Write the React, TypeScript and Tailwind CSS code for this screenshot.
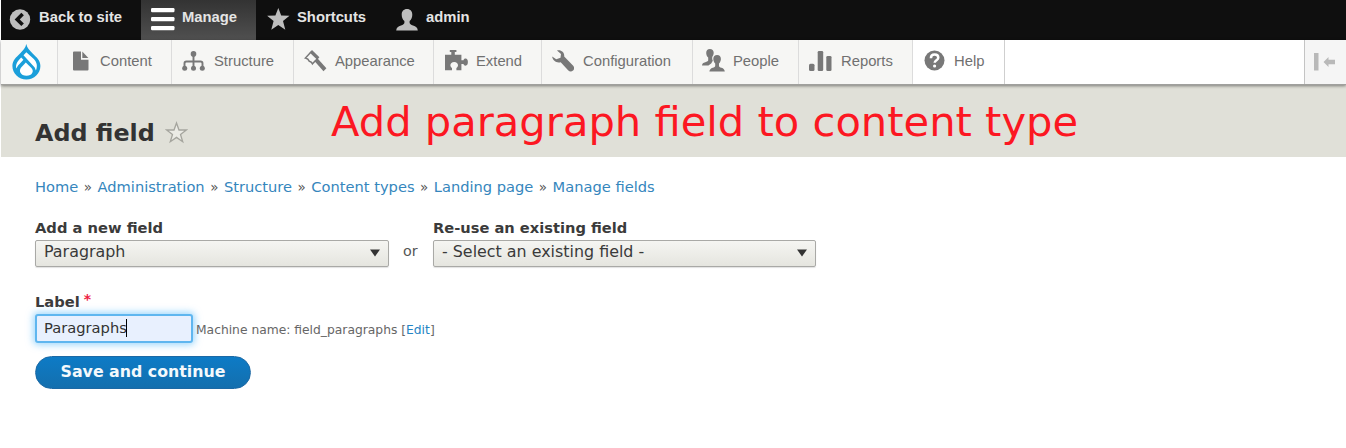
import React from "react";

const SANS = "font-['Liberation_Sans',sans-serif]";

function BackIcon() {
  return (
    <svg width="22" height="22" viewBox="0 0 22 22">
      <circle cx="11" cy="10.500" r="10.200" fill="#bebebe" />
      <path d="M13.600 5 8.200 10.400l5.400 5.400" fill="none" stroke="#111" strokeWidth="3.600" />
    </svg>
  );
}

function MenuIcon() {
  return (
    <svg width="24" height="24" viewBox="0 0 24 24" fill="#fff">
      <rect x="0" y="0" width="23.500" height="4.200" rx="1.200" />
      <rect x="0" y="9" width="23.500" height="4.200" rx="1.200" />
      <rect x="0" y="18" width="23.500" height="4.200" rx="1.200" />
    </svg>
  );
}

function StarIcon() {
  return (
    <svg width="23" height="23" viewBox="0 0 23 23" fill="#bebebe">
      <path d="M11.300 0l2.900 7.500 8.300.3-6.500 5.300 2.300 8.700-7-4.700-7 4.700 2.300-8.700L.1 7.800l8.300-.3z" />
    </svg>
  );
}

function UserIcon() {
  return (
    <svg width="22" height="22" viewBox="0 0 22 22" fill="#bebebe">
      <path d="M11 0c3.400 0 5.300 2.300 5.300 5.700 0 2.600-1.200 5-2.700 6.300v1.700c0 1.300 1.400 2 3.400 2.800 2.900 1.100 4.500 2 4.800 5H.2c.3-3 1.900-3.900 4.800-5 2-.8 3.400-1.500 3.400-2.800V12c-1.500-1.300-2.700-3.700-2.700-6.300C5.700 2.300 7.600 0 11 0z" />
    </svg>
  );
}

function DropIcon() {
  return (
    <svg width="29" height="36" viewBox="0 0 29 36">
      <path
        d="M14.300 0c-.8 3.900-3.200 6.300-6 9.200C4.200 13.300.4 16.300.4 22.100c0 7.700 6.300 13.400 14 13.400s14-5.700 14-13.400c0-5.800-3.900-8.800-8-12.900C17.500 6.300 15.100 3.900 14.300 0z"
        fill="#1b9fda"
      />
      <path d="M14.300 8.200 11.500 11.200l11.200 12.400 1.200 3c1.900-4.300 1-8.300-2.100-11.500z" fill="#fff" />
      <path d="M9.200 13.500c-3.300 3.100-5.900 6.500-4.900 11.100 1-2.600 2.700-4.300 4.600-6.200l2.500-2.600z" fill="#fff" />
      <path d="m13.800 18.600-4.600 4.800c-2.900 3.200-.7 8.300 5.300 8.300 5.700 0 7.900-4.600 4.900-7.800z" fill="#fff" />
    </svg>
  );
}

const G = "#787878";

function FileIcon() {
  return (
    <svg width="16" height="20" viewBox="0 0 16 20" fill={G}>
      <path d="M1 .5h7v8.200h7.500V18.500a1 1 0 0 1-1 1H1a1 1 0 0 1-1-1v-17a1 1 0 0 1 1-1z" />
      <path d="M9.300.5 15.400 7H9.300z" />
    </svg>
  );
}

function TreeIcon() {
  return (
    <svg width="23" height="20" viewBox="0 0 23 20">
      <path d="M11.500 3v14M2.500 17v-4.600c0-1.300.6-1.900 1.900-1.900h14.200c1.300 0 1.900.6 1.900 1.900V17" fill="none" stroke={G} strokeWidth="1.900" />
      <g fill={G}>
        <circle cx="11.500" cy="2.900" r="2.800" />
        <circle cx="2.700" cy="17.200" r="2.500" />
        <circle cx="11.500" cy="17.200" r="2.500" />
        <circle cx="20.300" cy="17.200" r="2.500" />
      </g>
    </svg>
  );
}

function BrushIcon() {
  return (
    <svg width="23" height="22" viewBox="0 0 23 22">
      <path d="M7 1.900 1.400 8c2.300.4 3.200 1.300 3.900 3.200 1.600.2 2.500 1 3.100 2.600l5.200-5.400" fill="none" stroke={G} strokeWidth="1.500" />
      <path d="M8 0 15.400 7.200 13.200 9.800 5.600 2.500z" fill={G} />
      <path d="m10.400 10.900 3.200-2.300L22.400 18.300 19.500 21.300z" fill={G} />
    </svg>
  );
}

function PuzzleIcon() {
  return (
    <svg width="23" height="21" viewBox="0 0 23 21" fill={G}>
      <path d="M4.800 0h6.600v2H9.800v2.800h6.600v5.400h2.100c.2-1 1-1.700 2.100-1.700 1.400 0 2.300 1.400 2.300 3.600s-.9 3.600-2.300 3.600c-1.100 0-1.900-.6-2.100-1.700h-2.100v6.300h-5v-2.400c1-.4 1.600-1.400 1.600-2.600 0-1.900-1.500-3.200-3.800-3.200s-3.800 1.300-3.800 3.200c0 1.200.6 2.200 1.600 2.600v2.400H0V4.800h6.300V2H4.800z" />
    </svg>
  );
}

function WrenchIcon() {
  return (
    <svg width="22" height="22" viewBox="0 0 22 22" fill={G}>
      <path d="M5 .6C8.800-.6 12.700 2.200 12.200 6.600l9 9.200c1.500 1.600 1 3.700-.2 4.800-1.300 1.200-3.500 1.200-4.900-.3L8.700 12.200C4.400 13.400.9 10.600.1 6.500l4.200 2.800 4.200-1.500.5-3.800z" />
    </svg>
  );
}

function PeopleIcon() {
  return (
    <svg width="23" height="23" viewBox="0 0 23 23" fill={G}>
      <path d="M7.900 0c2.300 0 3.800 1.500 3.800 3.800 0 .8-.2 1.600-.5 2.400-1.300 1.300-1.300 3.600-.4 5.600l-1.600 2.700-2.800 2H0c.2-2.100 1.200-2.600 3.300-3.300 1.800-.7 2.900-1 2.900-2V8.500C5.100 7.600 4.200 5.700 4.200 3.900 4.200 1.500 5.600 0 7.900 0z" />
      <path d="M15.100 6.100c2.400 0 3.800 1.600 3.800 4 0 1.800-.9 3.600-1.900 4.500v2.100c0 1.100.9 1.500 2.500 2.100 2 .7 3.100 1.700 3.300 3.800H7.400c.2-2.100 1.300-3.100 3.300-3.800 1.600-.6 2.500-1 2.500-2.100v-2.100c-1-.9-1.900-2.700-1.900-4.500 0-2.400 1.400-4 3.800-4z" />
    </svg>
  );
}

function ChartIcon() {
  return (
    <svg width="23" height="20" viewBox="0 0 23 20" fill={G}>
      <rect x="0" y="12.800" width="5.500" height="7.200" rx="1.500" />
      <rect x="8.700" y="0" width="5.500" height="20" rx="1.300" />
      <rect x="17.300" y="5" width="5.200" height="15" rx="1.300" />
    </svg>
  );
}

function HelpIcon() {
  return (
    <svg width="21" height="21" viewBox="0 0 21 21">
      <circle cx="10.500" cy="10.500" r="10" fill={G} />
      <path d="M6.900 8.200c0-2.400 1.500-3.600 3.700-3.600s3.700 1.200 3.700 3.100c0 2.500-3.600 2.700-3.600 5.100" fill="none" stroke="#fff" strokeWidth="2.500" />
      <circle cx="10.600" cy="16" r="1.600" fill="#fff" />
    </svg>
  );
}

function Item({ width, pad, gap, icon, label, help = false }: any) {
  return (
    <div
      className={`flex h-full shrink-0 items-center border-r pb-[2px] ${width} ${pad} ${help ? "border-[#cfcfcf] bg-white" : "border-[#dcdcdc] bg-[#f6f6f4]"}`}
    >
      <span className="flex shrink-0">{icon}</span>
      <span className={`${SANS} ${gap} whitespace-nowrap text-[14.800px] leading-5 text-[#707070]`}>{label}</span>
    </div>
  );
}

function TopItem({ width, pad, gap, icon, label, active = false }: any) {
  return (
    <div className={`flex h-full shrink-0 items-center ${width} ${pad} ${active ? "bg-linear-to-b from-[#333] to-[#505050]" : ""}`}>
      <span className="flex shrink-0">{icon}</span>
      <span className={`${SANS} ${gap} -mt-[5px] whitespace-nowrap text-[14.800px] font-bold leading-5 text-[#e4e4e4]`}>{label}</span>
    </div>
  );
}

function SelectBox({ width, tracking, children }: any) {
  return (
    <div
      className={`flex h-[27px] items-center justify-between rounded-[2px] border border-[#a9a9a6] bg-linear-to-b from-[#f5f5f2] to-[#e5e5df] pl-2 pr-[8px] shadow-[0_1px_1px_rgba(0,0,0,0.12)] ${width}`}
    >
      <span className={`-mt-[3px] whitespace-nowrap leading-5 text-[#3a3a3a] ${tracking}`}>{children}</span>
      <svg width="10" height="8" viewBox="0 0 10 8">
        <path d="M0 .5h10L5 7.500z" fill="#333" />
      </svg>
    </div>
  );
}

const crumbs = ["Home", "Administration", "Structure", "Content types", "Landing page", "Manage fields"];

export default function App() {
  return (
    <div className="h-[448px] w-[1346px] overflow-hidden bg-white pl-px font-['DejaVu_Sans',sans-serif] text-[#444]">
      <nav className="flex h-[39.500px] bg-[#0f0f0f]">
        <TopItem width="w-[140px]" pad="pl-[8px]" gap="ml-[8px]" icon={<BackIcon />} label="Back to site" />
        <TopItem width="w-[115px]" pad="pl-[10px]" gap="ml-[7px]" icon={<MenuIcon />} label="Manage" active />
        <TopItem width="w-[130px]" pad="pl-[11px]" gap="ml-[7px]" icon={<StarIcon />} label="Shortcuts" />
        <TopItem width="w-[110px]" pad="pl-[10px]" gap="ml-[8px]" icon={<UserIcon />} label="admin" />
      </nav>

      <div className="relative flex h-[45px] border-b border-[#a0a09d] bg-white shadow-[0_1px_3px_rgba(0,0,0,0.45)]">
        <div className="flex w-[57px] items-center border-r border-[#dcdcdc] bg-[#f8f8f6] pl-[11px] pt-px">
          <DropIcon />
        </div>
        <Item width="w-[114px]" pad="pl-[15px]" gap="ml-[11px]" icon={<FileIcon />} label="Content" />
        <Item width="w-[122px]" pad="pl-[10px]" gap="ml-[9px]" icon={<TreeIcon />} label="Structure" />
        <Item width="w-[140px]" pad="pl-[10px]" gap="ml-[8px]" icon={<BrushIcon />} label="Appearance" />
        <Item width="w-[108px]" pad="pl-[11px]" gap="ml-[8px]" icon={<PuzzleIcon />} label="Extend" />
        <Item width="w-[151px]" pad="pl-[10px]" gap="ml-[9px]" icon={<WrenchIcon />} label="Configuration" />
        <Item width="w-[106px]" pad="pl-[9px]" gap="ml-[8px]" icon={<PeopleIcon />} label="People" />
        <Item width="w-[114px]" pad="pl-[10px]" gap="ml-[9px]" icon={<ChartIcon />} label="Reports" />
        <Item width="w-[92px]" pad="pl-[11px]" gap="ml-[9px]" icon={<HelpIcon />} label="Help" help />
        <div className="ml-auto flex w-[42px] items-center border-l border-[#c4c4c4] bg-[#f5f5f5] pl-[9px]">
          <svg width="24" height="18" viewBox="0 0 24 18" fill="#b9b9b9">
            <rect x="0" y="0" width="4.500" height="17.500" />
            <path d="M9.500 9l5-5v2.800h6.500v4.400h-6.500V14z" />
          </svg>
        </div>
      </div>

      <header className="flex h-[72px] bg-[#e0e0d8]">
        <h1 className="ml-[34px] mt-[34px] w-[130px] whitespace-nowrap text-[23.800px] font-bold leading-7 text-[#333]">Add field</h1>
        <svg className="mt-[36px]" width="23" height="23" viewBox="0 0 23 23">
          <path d="M11.500 2l2.500 7h7.400l-5.900 4.500 2.200 7.200-6.200-4.300-6.200 4.300 2.200-7.200L1.600 9H9z" fill="#ebebe5" stroke="#a5a59e" strokeWidth="1.300" />
        </svg>
        <p className="ml-[143px] mt-[9px] whitespace-nowrap text-[41.640px] leading-[56px] text-[#fc1722]">Add paragraph field to content type</p>
      </header>

      <main className="pl-[34px]">
        <div className="mt-5 flex h-5 items-center gap-[5.500px] whitespace-nowrap text-[14.650px] leading-5 text-[#3586bd]">
          {crumbs.map((c, i) => (
            <React.Fragment key={c}>
              {i > 0 && <span className="text-[13.500px] text-[#555]">»</span>}
              <a>{c}</a>
            </React.Fragment>
          ))}
        </div>

        <div className="mt-[21px] flex">
          <div>
            <label className="block h-[22px] whitespace-nowrap text-[14.700px] font-bold leading-5 text-[#3b3b3b]">Add a new field</label>
            <SelectBox width="w-[354px]" tracking="text-[15.900px]">Paragraph</SelectBox>
          </div>
          <span className="ml-[14px] mt-[23px] w-[30px] text-[14.300px] leading-5 text-[#555]">or</span>
          <div>
            <label className="block h-[22px] whitespace-nowrap text-[14.650px] font-bold leading-5 text-[#3b3b3b]">Re-use an existing field</label>
            <SelectBox width="w-[383px]" tracking="text-[15.900px]">- Select an existing field -</SelectBox>
          </div>
        </div>

        <label className="mt-[24px] flex h-[23px] pt-px text-[14.700px] font-bold leading-5 text-[#3b3b3b]">
          Label
          <span className="-mt-[3px] ml-[4px] text-[14px] text-[#ee2244]">*</span>
        </label>
        <div className="flex items-center">
          <div className="flex h-[29px] w-[158px] items-center rounded-[3px] border-2 border-[#5fb6ef] bg-[#e8f0fe] pl-[7px] shadow-[0_0_7px_2px_rgba(110,195,250,0.65)]">
            <span className="whitespace-nowrap text-[14.700px] leading-5 text-[#333]">Paragraphs</span>
            <i className="-ml-px h-[18px] w-px bg-black" />
          </div>
          <span className="ml-[3px] mt-[3px] whitespace-nowrap text-[12.300px] leading-5 text-[#666]">
            Machine name: field_paragraphs [<a className="text-[#2484c4]">Edit</a>]
          </span>
        </div>
        <button className="mt-[13px] flex h-[33px] w-[216px] items-center justify-center rounded-full border border-[#1c69a5] bg-linear-to-b from-[#0d7bc6] to-[#136fae] text-[15.800px] font-bold leading-5 text-[#f4f9fc]">
          <span className="h-5">Save and continue</span>
        </button>
      </main>
    </div>
  );
}
